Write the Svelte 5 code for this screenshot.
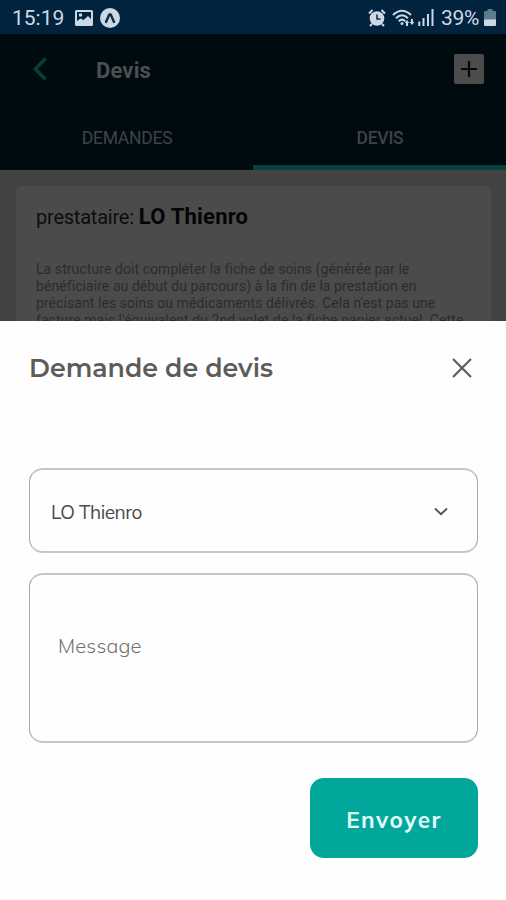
<script>
  const tabs = ['DEMANDES', 'DEVIS'];
  const details = [
    'La structure doit compléter la fiche de soins (générée par le',
    'bénéficiaire au début du parcours) à la fin de la prestation en',
    "précisant les soins ou médicaments délivrés. Cela n'est pas une",
    "facture mais l'équivalent du 2nd volet de la fiche papier actuel. Cette",
  ];

  let activeTab = $state('DEVIS');
  let provider = $state('LO Thienro');
  let message = $state('');
</script>

<div class="screen">
  <div class="status-bar">
    <span class="clock">15:19</span>
    <svg class="picture" width="18" height="16" viewBox="0 0 18 16">
      <path
        fill="currentColor"
        fill-rule="evenodd"
        d="M1.500 0h15Q18 0 18 1.500v13q0 1.500-1.500 1.500h-15Q0 16 0 14.500v-13Q0 0 1.500 0zM2 2v9l3.500-2.500 3 1.500L13 6l3 3V2zM4 3.500h3v3H4z"
      />
    </svg>
    <svg class="expo" width="20" height="20" viewBox="0 0 20 20">
      <circle cx="10" cy="10" r="10" fill="currentColor" />
      <path d="M6 14L9.300 6.500h1.400L14 14" fill="none" stroke="#102a42" stroke-width="2.400" stroke-linejoin="round" stroke-linecap="round" />
    </svg>
    <span class="spacer"></span>
    <svg class="alarm" width="18" height="18" viewBox="0 0 18 18">
      <circle cx="9" cy="9.500" r="7.300" fill="currentColor" />
      <path d="M1 4.500L4.500 1M17 4.500L13.500 1M4 15l-2 2M14 15l2 2" stroke="currentColor" stroke-width="2" />
      <path d="M9 5.500v4.500h3.500" fill="none" stroke="#12304a" stroke-width="1.600" />
    </svg>
    <svg class="wifi" width="23" height="18" viewBox="0 0 23 18">
      <g fill="none" stroke="currentColor" stroke-width="2">
        <path d="M1 6q9-8.500 18 0" />
        <path d="M4 9.200q6-5.800 12 0" />
        <path d="M6.800 12.200q3.200-3.200 6.400 0" />
      </g>
      <circle cx="10" cy="14.500" r="1.500" fill="currentColor" />
      <path d="M15 11l2.300 3h-1.300v3h-2v-3h-1.300zM20 16L17.500 13h1.400v-3h2v3h1.500z" fill="currentColor" />
    </svg>
    <svg class="signal" width="16" height="17" viewBox="0 0 16 17">
      <path d="M1.300 12.500V17M5.500 9v8M10 5v12M14.500 0v17" stroke="currentColor" stroke-width="2" />
    </svg>
    <span class="percent">39%</span>
    <svg class="battery" width="12" height="17" viewBox="0 0 12 17">
      <path d="M3.500 0h5v2H11q1 0 1 1v8H0V3q0-1 1-1h2.500z" fill="#5e7b8c" />
      <path d="M0 10.500h12V16q0 1-1 1H1q-1 0-1-1z" fill="currentColor" />
    </svg>
  </div>

  <div class="page">
    <header>
      <svg class="back" width="14" height="24" viewBox="0 0 14 24">
        <path d="M12.500 1.500L2.500 12l10 10.500" fill="none" stroke="currentColor" stroke-width="3.600" />
      </svg>
      <h1>Devis</h1>
      <button class="add" aria-label="Ajouter">
        <svg width="18" height="18" viewBox="0 0 18 18">
          <path d="M9 1v16M1 9h16" stroke="currentColor" stroke-width="2.200" />
        </svg>
      </button>
    </header>
    <nav>
      {#each tabs as tab}
        <button class="tab" class:active={tab === activeTab} onclick={() => (activeTab = tab)}>{tab}</button>
      {/each}
    </nav>
    <main>
      <article>
        <p class="provider"><span>prestataire:</span> <strong>LO Thienro</strong></p>
        <div class="details">
          {#each details as line}
            <div>{line}</div>
          {/each}
        </div>
      </article>
    </main>
  </div>

  <section class="sheet">
    <div class="sheet-head">
      <h2>Demande de devis</h2>
      <button class="close" aria-label="Fermer">
        <svg width="20" height="20" viewBox="0 0 20 20">
          <path d="M1 1l18 18M19 1L1 19" stroke="currentColor" stroke-width="2.200" />
        </svg>
      </button>
    </div>
    <button class="select">
      <span>{provider}</span>
      <svg width="14" height="9" viewBox="0 0 14 9">
        <path d="M1 1.500l6 5.700 6-5.700" fill="none" stroke="currentColor" stroke-width="1.900" />
      </svg>
    </button>
    <textarea placeholder="Message" bind:value={message}></textarea>
    <button class="send">Envoyer</button>
  </section>
</div>

<style>
  :global(body) {
    margin: 0;
    background: #fff;
  }

  .screen {
    display: flex;
    flex-direction: column;
    width: 506px;
    height: 900px;
    overflow: hidden;
    font-family: Roboto, sans-serif;
  }

  button {
    margin: 0;
    padding: 0;
    border: none;
    background: none;
    color: inherit;
    font: inherit;
  }

  svg {
    display: block;
    flex: none;
  }

  .status-bar {
    display: flex;
    align-items: center;
    box-sizing: border-box;
    height: 34px;
    padding: 1px 10px 0 12px;
    background: #02233e;
    color: #ccd9e5;
    font-size: 21px;
  }

  .clock {
    width: 63px;
  }

  .expo {
    margin-left: 7px;
  }

  .spacer {
    flex: 1;
  }

  .wifi {
    margin-left: 6px;
  }

  .signal {
    margin-left: 3px;
  }

  .percent {
    width: 39px;
    margin: 0 4px 0 7px;
    letter-spacing: -0.3px;
  }

  .page {
    display: flex;
    flex-direction: column;
    height: 287px;
    overflow: hidden;
    background: #424242;
  }

  header {
    display: flex;
    align-items: center;
    flex: none;
    height: 70px;
    padding: 0 22px 0 33px;
    background: #000b10;
  }

  .back {
    color: #044038;
  }

  h1 {
    flex: 1;
    margin: 3px 0 0 49px;
    color: #4b4f52;
    font-size: 22px;
    font-weight: 700;
    line-height: 26px;
    letter-spacing: 0.15px;
  }

  .add {
    display: flex;
    align-items: center;
    justify-content: center;
    width: 30px;
    height: 30px;
    border-radius: 2px;
    background: #4c4c4c;
    color: #05090c;
  }

  nav {
    display: flex;
    flex: none;
    height: 66px;
    background: #000b10;
  }

  .tab {
    flex: 1;
    box-sizing: border-box;
    padding: 7px 0 0 1px;
    border-bottom: 5px solid transparent;
    color: #3e4347;
    font-size: 17.5px;
    font-weight: 400;
    letter-spacing: -0.25px;
  }

  .tab.active {
    border-color: #04423b;
    font-weight: 500;
  }

  main {
    padding: 16px 15px 0 16px;
  }

  article {
    height: 200px;
    padding: 16px 20px 0;
    border-radius: 5px;
    background: #4b4b4b;
  }

  .provider {
    margin: 0;
    color: #0d0d0d;
    font-size: 20px;
    line-height: 30px;
    white-space: nowrap;
  }

  .provider span {
    letter-spacing: -0.22px;
  }

  .provider strong {
    color: #050505;
    font-size: 22px;
    font-weight: 700;
    letter-spacing: 0.2px;
  }

  .details {
    margin-top: 29px;
    color: #2b2b2b;
    font-size: 14px;
    line-height: 17px;
    letter-spacing: 0.07px;
    white-space: nowrap;
  }

  .sheet {
    display: flex;
    flex: 1;
    flex-direction: column;
    padding: 0 28px 0 29px;
    background: #fefefe;
  }

  .sheet-head {
    display: flex;
    align-items: center;
    justify-content: space-between;
    height: 94px;
    padding-right: 6px;
    color: #5c5c5c;
  }

  h2 {
    margin: 0;
    font-family: Montserrat, Inter, sans-serif;
    font-size: 25.3px;
    font-weight: 600;
    white-space: nowrap;
  }

  .select {
    display: flex;
    align-items: center;
    justify-content: space-between;
    box-sizing: border-box;
    height: 85px;
    margin-top: 53px;
    padding: 2px 29px 0 21px;
    border: 2px solid #c6c6c6;
    border-width: 2px 1px;
    border-color: #c6c6c6 #a9a9a9;
    border-radius: 14px;
    color: #4b4b4b;
    font-family: Muli, Mulish, Nunito, 'Open Sans', sans-serif;
    font-size: 19px;
    letter-spacing: -0.45px;
  }

  .select svg {
    color: #555;
  }

  textarea {
    box-sizing: border-box;
    height: 170px;
    margin: 20px 0 0;
    padding: 57px 27px 20px 28px;
    border: 2px solid #c6c6c6;
    border-width: 2px 1px;
    border-color: #c6c6c6 #a9a9a9;
    border-radius: 14px;
    outline: none;
    background: transparent;
    color: #4b4b4b;
    font-family: Muli, Mulish, Nunito, Lato, sans-serif;
    font-size: 20px;
    font-weight: 300;
    line-height: 28px;
    letter-spacing: 0.2px;
    resize: none;
  }

  textarea::placeholder {
    color: #707070;
    opacity: 1;
  }

  .send {
    align-self: flex-end;
    width: 168px;
    height: 80px;
    margin-top: 35px;
    padding-top: 2px;
    border-radius: 14px;
    background: #02a79c;
    color: #e2fbf7;
    font-family: Muli, Mulish, Nunito, 'Open Sans', sans-serif;
    font-size: 22.5px;
    font-weight: 700;
    letter-spacing: 1.5px;
  }
</style>
